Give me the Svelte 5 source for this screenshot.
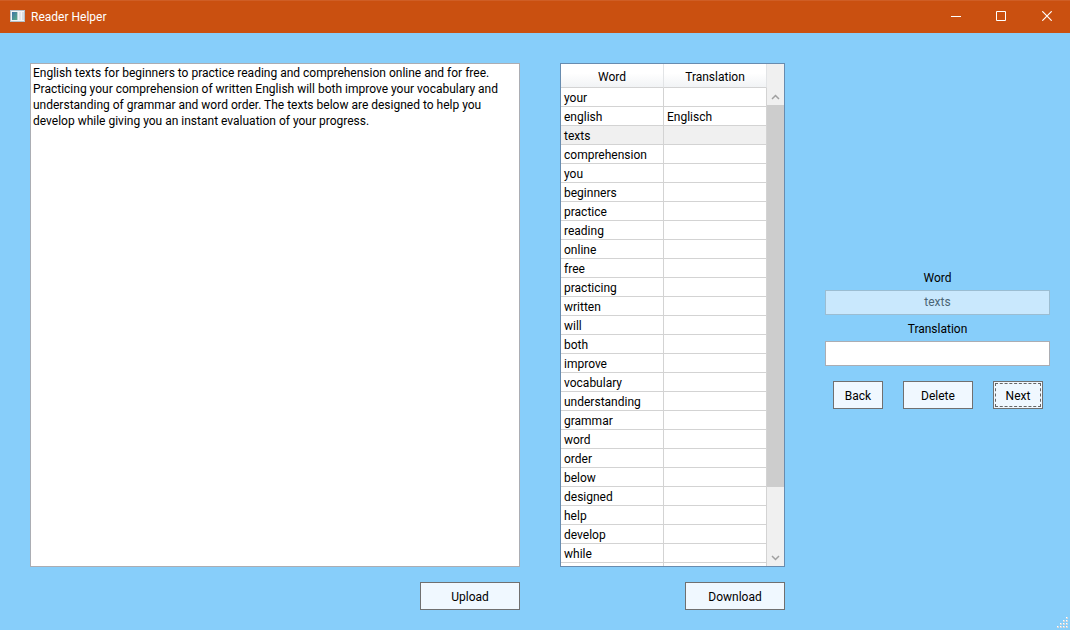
<script>
  const rows = [
    ['your', ''], ['english', 'Englisch'], ['texts', ''], ['comprehension', ''],
    ['you', ''], ['beginners', ''], ['practice', ''], ['reading', ''],
    ['online', ''], ['free', ''], ['practicing', ''], ['written', ''],
    ['will', ''], ['both', ''], ['improve', ''], ['vocabulary', ''],
    ['understanding', ''], ['grammar', ''], ['word', ''], ['order', ''],
    ['below', ''], ['designed', ''], ['help', ''], ['develop', ''],
    ['while', ''], ['', '']
  ];
  let current = $state(2);
  let text = $state('English texts for beginners to practice reading and comprehension online and for free. Practicing your comprehension of written English will both improve your vocabulary and understanding of grammar and word order. The texts below are designed to help you develop while giving you an instant evaluation of your progress.');
  let translation = $state('');

  function move(step) {
    current = Math.min(rows.length - 1, Math.max(0, current + step));
    translation = rows[current][1];
  }
</script>

<div class="window">
  <header>
    <svg class="app-icon" width="15" height="12" viewBox="0 0 15 12" aria-hidden="true">
      <defs>
        <linearGradient id="pane" x1="0" y1="0" x2="1" y2="1">
          <stop offset="0" stop-color="#3c72a8" />
          <stop offset="1" stop-color="#58ad86" />
        </linearGradient>
      </defs>
      <rect width="15" height="12" fill="#b4c0c8" />
      <rect x="1" y="1" width="13" height="10" fill="#f3f5f6" />
      <rect x="2" y="2" width="5" height="8" fill="url(#pane)" />
      <rect x="7" y="2" width="1" height="8" fill="#b9cfd2" />
      <rect x="9" y="2" width="2" height="8" fill="#e3e6e8" />
      <rect x="12" y="2" width="2" height="8" fill="#d9dee1" />
    </svg>
    <h1>Reader Helper</h1>
    <div class="caption">
      <button class="minimize" aria-label="Minimize">
        <svg width="10" height="10" viewBox="0 0 10 10"><path d="M0 5.5H10" /></svg>
      </button>
      <button aria-label="Maximize">
        <svg width="10" height="10" viewBox="0 0 10 10"><path d="M.5.5h9v9h-9z" /></svg>
      </button>
      <button aria-label="Close">
        <svg width="10" height="10" viewBox="0 0 10 10"><path d="M.3.3l9.4 9.4M9.7.3L.3 9.7" stroke-width="1.2" /></svg>
      </button>
    </div>
  </header>

  <main>
    <textarea aria-label="Text" spellcheck="false" bind:value={text}></textarea>

    <div class="list">
      <div class="scroller">
        <table>
          <thead>
            <tr><th scope="col">Word</th><th scope="col">Translation</th></tr>
          </thead>
          <tbody>
            {#each rows as [word, meaning], i}
              <tr class:selected={i === current}><td>{word}</td><td>{meaning}</td></tr>
            {/each}
          </tbody>
        </table>
      </div>
      <div class="scrollbar" aria-hidden="true">
        <svg width="9" height="6" viewBox="0 0 9 6"><path d="M1 5l3.5-3.5L8 5" /></svg>
        <div class="track"><div class="thumb"></div></div>
        <svg width="9" height="6" viewBox="0 0 9 6"><path d="M1 1l3.5 3.5L8 1" /></svg>
      </div>
    </div>

    <form onsubmit={(e) => e.preventDefault()}>
      <label for="word">Word</label>
      <input id="word" type="text" value={rows[current][0]} disabled />
      <label for="translation">Translation</label>
      <input id="translation" type="text" bind:value={translation} />
      <div class="actions">
        <button type="button" class="push" onclick={() => move(-1)}>Back</button>
        <button type="button" class="push wide">Delete</button>
        <button type="button" class="push next" onclick={() => move(1)}>Next</button>
      </div>
    </form>

    <button class="push file">Upload</button>
    <button class="push file">Download</button>
  </main>

  <svg class="grip" width="11" height="11" viewBox="0 0 11 11" aria-hidden="true">
    {#each [[9, 0], [6, 3], [9, 3], [3, 6], [6, 6], [9, 6], [0, 9], [3, 9], [6, 9], [9, 9]] as [x, y]}
      <rect {x} {y} width="2" height="2" fill="#d3d7da" />
      <rect {x} {y} width="1" height="1" fill="#fff" />
    {/each}
  </svg>
</div>

<style>
  .window {
    position: relative;
    display: flex;
    flex-direction: column;
    height: 100vh;
    background: #87cefa;
    color: #000;
    font: 12px/16px 'Segoe UI', Roboto, 'Open Sans', sans-serif;
  }
  .window * { box-sizing: border-box; }
  button, input, textarea { font: inherit; color: inherit; margin: 0; }

  header {
    display: flex;
    align-items: center;
    flex: none;
    height: 33px;
    padding: 0 0 2px 10px;
    border-top: 1px solid #cf5e25;
    background: #ca5010;
    color: #fff;
  }
  h1 { margin: 0 0 0 6px; padding-top: 2px; font: inherit; }
  .caption { display: flex; align-self: stretch; margin-left: auto; }
  .caption button {
    display: grid;
    place-items: center;
    width: 46px;
    padding: 0;
    border: 0;
    background: none;
  }
  .caption .minimize { width: 44px; }
  .caption path { fill: none; stroke: #fff; }

  main {
    display: grid;
    grid-template-columns: minmax(0, 1fr) 225px 225px;
    grid-template-rows: minmax(0, 1fr) auto;
    gap: 15px 40px;
    flex: 1;
    min-height: 0;
    padding: 30px 20px 20px 30px;
  }

  textarea {
    width: 100%;
    height: 100%;
    padding: 1px 2px;
    border: 1px solid #abadb3;
    border-radius: 0;
    background: #fff;
    resize: none;
    outline: 0;
  }

  .list {
    display: flex;
    min-height: 0;
    border: 1px solid #688caf;
    background: #fff;
  }
  .scroller { flex: 1; overflow: hidden; }
  table { width: 100%; table-layout: fixed; border-collapse: separate; border-spacing: 0; }
  th {
    height: 24px;
    padding: 2px 0 0;
    border-right: 1px solid #e2e4e6;
    border-bottom: 1px solid #d3d3d3;
    background: linear-gradient(#fff 40%, #f1f3f5);
    font-weight: 400;
  }
  td {
    height: 19px;
    padding: 2px 3px 0;
    border-right: 1px solid #d3d3d3;
    border-bottom: 1px solid #d3d3d3;
  }
  .selected { background: #f0f0f0; }

  .scrollbar {
    display: flex;
    flex-direction: column;
    align-items: center;
    flex: none;
    width: 17px;
    padding: 30px 0 5px;
    background: #f0f0f0;
  }
  .scrollbar path { fill: none; stroke: #a0a0a0; stroke-width: 1.5; }
  .track { flex: 1; width: 100%; margin: 5px 0 6px; }
  .thumb { height: 86%; background: #cdcdcd; }

  form { display: flex; flex-direction: column; align-self: center; padding-top: 48px; }
  label { text-align: center; margin-bottom: 4px; }
  input {
    width: 100%;
    height: 25px;
    padding: 0 4px;
    border: 1px solid #abadb3;
    border-radius: 0;
    background: #fff;
    text-align: center;
    outline: 0;
  }
  input:disabled {
    margin-bottom: 6px;
    border-color: #9bbdd2;
    background: #c9e8fd;
    color: #4b6576;
  }
  .actions { display: flex; justify-content: space-between; padding: 15px 7px 0 8px; }

  .push {
    width: 50px;
    height: 28px;
    padding: 2px 0 0;
    border: 1px solid #707070;
    border-radius: 0;
    background: #f0f8ff;
  }
  .wide { width: 70px; }
  .file { width: 100px; justify-self: end; }
  .next { outline: 1px dashed #666; outline-offset: -3px; }

  .grip { position: absolute; right: 2px; bottom: 2px; }
</style>
